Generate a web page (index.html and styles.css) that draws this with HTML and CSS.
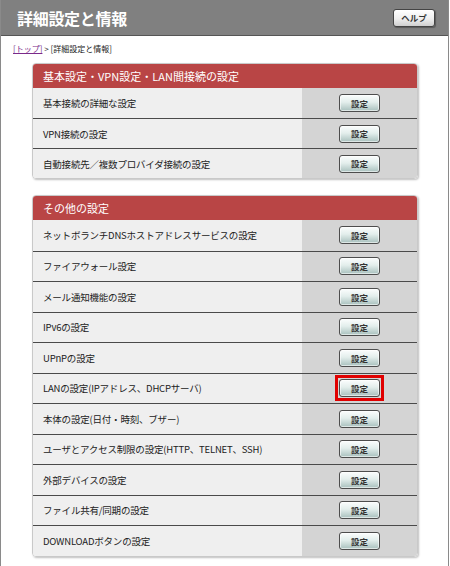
FILE: index.html
```html
<!DOCTYPE html>
<html lang="ja">
<head>
    <meta charset="UTF-8">
    <meta name="viewport" content="width=device-width, initial-scale=1.0">
    <title>詳細設定と情報</title>
    <link rel="stylesheet" href="styles.css">
</head>
<body>
    <div class="page">
        <div class="titlebar">
            <h1>詳細設定と情報</h1>
            <button class="help">ヘルプ</button>
        </div>

        <div class="crumbs"><a href="#">[トップ]</a> &gt; [詳細設定と情報]</div>

        <div class="panel">
            <div class="panel-head">基本設定・VPN設定・LAN間接続の設定</div>
            <div class="row">
                <div class="label">基本接続の詳細な設定</div>
                <div class="action"><button class="set">設定</button></div>
            </div>
            <div class="row">
                <div class="label">VPN接続の設定</div>
                <div class="action"><button class="set">設定</button></div>
            </div>
            <div class="row">
                <div class="label">自動接続先／複数プロバイダ接続の設定</div>
                <div class="action"><button class="set">設定</button></div>
            </div>
        </div>

        <div class="panel panel-tall">
            <div class="panel-head">その他の設定</div>
            <div class="row">
                <div class="label">ネットボランチDNSホストアドレスサービスの設定</div>
                <div class="action"><button class="set">設定</button></div>
            </div>
            <div class="row">
                <div class="label">ファイアウォール設定</div>
                <div class="action"><button class="set">設定</button></div>
            </div>
            <div class="row">
                <div class="label">メール通知機能の設定</div>
                <div class="action"><button class="set">設定</button></div>
            </div>
            <div class="row">
                <div class="label">IPv6の設定</div>
                <div class="action"><button class="set">設定</button></div>
            </div>
            <div class="row">
                <div class="label">UPnPの設定</div>
                <div class="action"><button class="set">設定</button></div>
            </div>
            <div class="row">
                <div class="label">LANの設定(IPアドレス、DHCPサーバ)</div>
                <div class="action"><span class="marked"><button class="set">設定</button></span></div>
            </div>
            <div class="row">
                <div class="label">本体の設定(日付・時刻、ブザー)</div>
                <div class="action"><button class="set">設定</button></div>
            </div>
            <div class="row">
                <div class="label">ユーザとアクセス制限の設定(HTTP、TELNET、SSH)</div>
                <div class="action"><button class="set">設定</button></div>
            </div>
            <div class="row">
                <div class="label">外部デバイスの設定</div>
                <div class="action"><button class="set">設定</button></div>
            </div>
            <div class="row">
                <div class="label">ファイル共有/同期の設定</div>
                <div class="action"><button class="set">設定</button></div>
            </div>
            <div class="row">
                <div class="label">DOWNLOADボタンの設定</div>
                <div class="action"><button class="set">設定</button></div>
            </div>
        </div>
    </div>
</body>
</html>
```

FILE: styles.css
```css
body {
    margin: 0;
    background: #fff;
    font-family: "Noto Sans CJK JP", "Liberation Sans", sans-serif;
    color: #222;
}
.page {
    width: 447px;
    min-height: 566px;
    border-left: 1px solid #8a8a8a;
    border-right: 1px solid #8a8a8a;
}
.titlebar {
    display: flex;
    align-items: center;
    justify-content: space-between;
    height: 35px;
    background: #808080;
    border-bottom: 1px solid #555;
    padding: 0 13px 0 16px;
}
.titlebar h1 {
    margin: 0;
    color: #fff;
    font-size: 16px;
    font-weight: bold;
    line-height: 1;
    letter-spacing: -0.3px;
}
.help {
    width: 42px;
    height: 18px;
    padding: 0;
    border: 1px solid #444;
    border-radius: 3px;
    background: linear-gradient(#ffffff, #eeeeee 55%, #cfcfcf);
    box-shadow: 1px 1px 1px rgba(0, 0, 0, 0.3);
    font-family: inherit;
    font-size: 8.5px;
    font-weight: bold;
    color: #333;
    line-height: 1;
}
.crumbs {
    padding: 7px 0 0 12px;
    height: 20px;
    font-size: 8px;
    line-height: 12px;
    color: #222;
}
.crumbs a {
    color: #7b2a8a;
}
.panel {
    width: 384px;
    margin: 0 0 16px 31px;
    border: 1px solid #c9c9c9;
    border-radius: 4px;
    overflow: hidden;
    box-shadow: 1px 1px 2px rgba(0, 0, 0, 0.25);
}
.panel-head {
    height: 24px;
    line-height: 24px;
    padding-left: 10px;
    background: #b94545;
    color: #fff;
    font-size: 11px;
}
.row {
    display: flex;
    height: 30px;
}
.panel-tall .row {
    height: 30.5px;
}
.row + .row .label,
.row + .row .action {
    border-top: 1px solid #4a4a4a;
}
.label {
    flex: 1;
    display: flex;
    align-items: center;
    padding-left: 10px;
    background: #efefef;
    font-size: 9.5px;
    letter-spacing: -0.2px;
}
.action {
    width: 115px;
    display: flex;
    align-items: center;
    justify-content: center;
    background: #d4d4d4;
}
.set {
    width: 41px;
    height: 18px;
    padding: 0;
    border: 1px solid #4d4d4d;
    border-radius: 3px;
    background: linear-gradient(#fbfdfd, #e3eeec 45%, #a8c0bd);
    box-shadow: inset 0 0 0 1px rgba(255, 255, 255, 0.6);
    font-family: inherit;
    font-size: 8.5px;
    font-weight: bold;
    color: #333;
    line-height: 1;
    vertical-align: top;
}
.marked {
    display: inline-block;
    border: 3px solid #e00000;
    padding: 1px;
    line-height: 0;
}
```
